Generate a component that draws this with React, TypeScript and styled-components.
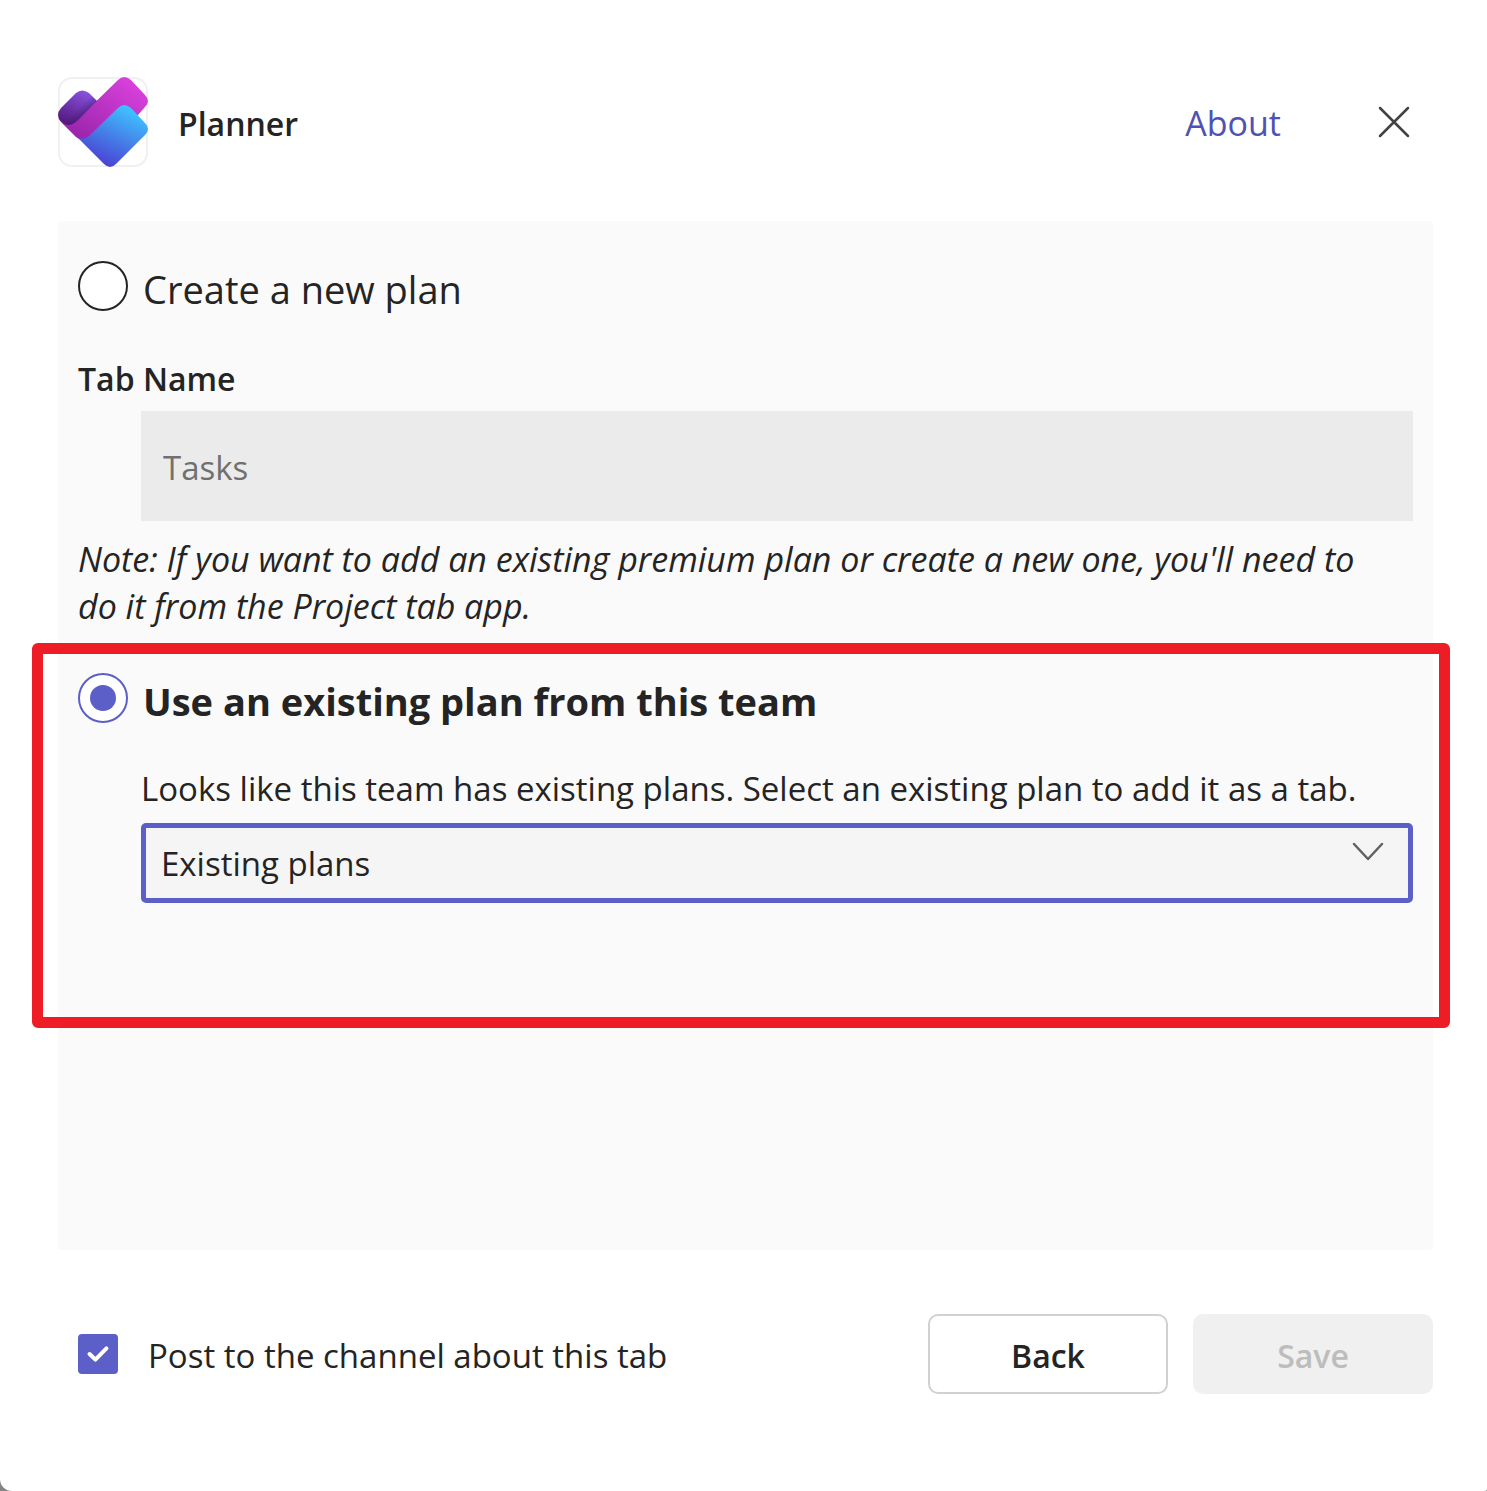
import React, { useState } from "react";
import styled, { createGlobalStyle } from "styled-components";

const GlobalStyle = createGlobalStyle`
  *, *::before { box-sizing: border-box; }
  body {
    margin: 0;
    background: #848484;
    color: #242424;
    font-family: "Open Sans", "Noto Sans", sans-serif;
    font-size: 33px;
    line-height: 47px;
  }
  button, input, select { font: inherit; color: inherit; margin: 0; }
`;

const Dialog = styled.main`
  display: flex;
  flex-direction: column;
  min-height: 100vh;
  padding: 77px 54px 97px 58px;
  background: #fff;
  border-radius: 0 0 2px 12px;
`;

const Header = styled.header`
  display: flex;
  align-items: center;
  height: 90px;
  margin-bottom: 54px;
`;

const LogoFrame = styled.div`
  width: 90px;
  height: 90px;
  margin-right: 30px;
  border-radius: 14px;
  box-shadow: inset 0 0 0 2px #f0f0f0;
  svg { display: block; }
`;

const Title = styled.h1`
  flex: 1;
  margin: 0;
  padding-top: 3px;
  font-size: 32px;
  font-weight: 600;
`;

const AboutLink = styled.a`
  margin-right: 74px;
  padding-top: 3px;
  color: #4f52b2;
  font-size: 34px;
  text-decoration: none;
`;

const CloseButton = styled.button`
  display: grid;
  place-items: center;
  width: 78px;
  height: 78px;
  padding: 0;
  border: 0;
  background: none;
`;

const Panel = styled.section`
  flex: 1;
  padding: 40px 20px;
  background: #fafafa;
  border-radius: 4px;
`;

const OptionRow = styled.div`
  display: flex;
  gap: 15px;
`;

const OptionLabel = styled.label<{ $selected: boolean }>`
  font-size: 38px;
  line-height: 56px;
  font-weight: ${(p) => (p.$selected ? 700 : 400)};
`;

const Radio = styled.input`
  appearance: none;
  display: grid;
  place-items: center;
  flex: none;
  width: 50px;
  height: 50px;
  border: 2px solid #242424;
  border-radius: 50%;
  background: #fff;
  &:checked { border-color: #5b5fc7; }
  &:checked::before {
    content: "";
    width: 26px;
    height: 26px;
    border-radius: 50%;
    background: #5b5fc7;
  }
`;

const FieldLabel = styled.label`
  display: block;
  margin: 38px 0 9px;
  font-size: 32px;
  font-weight: 600;
`;

const Indented = styled.div`
  margin-left: 63px;
`;

const TextInput = styled.input`
  display: block;
  width: 100%;
  height: 110px;
  padding: 3px 22px 0;
  border: 0;
  background: #ebebeb;
  &:disabled { color: #707070; }
`;

const Note = styled.p`
  margin: 15px 0 13px;
  padding-right: 40px;
  font-size: 34px;
  font-style: italic;
`;

const ExistingPlan = styled.div`
  position: relative;
  padding: 30px 0 125px;
`;

const Highlight = styled.div`
  position: absolute;
  inset: 0 -37px 0 -46px;
  border: 11px solid #ee1c24;
  border-radius: 6px;
  pointer-events: none;
`;

const SelectLabel = styled.label`
  display: block;
  margin: 36px 0 11px;
`;

const SelectBox = styled.div`
  display: grid;
  > * { grid-area: 1 / 1; }
  > svg {
    justify-self: end;
    margin: 19px 29px 0 0;
    pointer-events: none;
  }
`;

const Select = styled.select`
  appearance: none;
  width: 100%;
  height: 80px;
  padding: 0 80px 0 15px;
  border: 5px solid #5b5fc7;
  border-radius: 5px;
  background: #f5f5f5;
  outline: 0;
`;

const Footer = styled.footer`
  display: flex;
  align-items: center;
  gap: 25px;
  margin-top: 64px;
  padding-left: 20px;
`;

const PostOption = styled.label`
  display: flex;
  flex: 1;
  align-items: center;
  gap: 30px;
`;

const PostText = styled.span`
  padding-top: 3px;
`;

const CheckWrap = styled.span`
  display: grid;
  place-items: center;
  > * { grid-area: 1 / 1; }
  > svg { pointer-events: none; }
`;

const Checkbox = styled.input`
  appearance: none;
  width: 40px;
  height: 40px;
  border: 2px solid #5b5fc7;
  border-radius: 4px;
  &:checked { background: #5b5fc7; }
`;

const ActionButton = styled.button`
  width: 240px;
  height: 80px;
  padding: 3px 0 0;
  border: 2px solid #d1d1d1;
  border-radius: 10px;
  background: #fff;
  font-size: 32px;
  font-weight: 600;
  &:disabled {
    border-color: #f0f0f0;
    background: #f0f0f0;
    color: #bdbdbd;
  }
`;

const PlannerLogo = () => (
  <svg width="90" height="90" viewBox="0 0 90 90" aria-hidden="true">
    <defs>
      <linearGradient id="violet" x1="28" y1="16" x2="14" y2="48" gradientUnits="userSpaceOnUse">
        <stop offset="0" stopColor="#8650dc" />
        <stop offset="1" stopColor="#561a80" />
      </linearGradient>
      <linearGradient id="shade" x1="18" y1="24" x2="30" y2="36" gradientUnits="userSpaceOnUse">
        <stop offset="0.4" stopColor="#3b1268" stopOpacity="0" />
        <stop offset="1" stopColor="#3b1268" stopOpacity="0.5" />
      </linearGradient>
      <linearGradient id="pink" x1="70" y1="2" x2="26" y2="62" gradientUnits="userSpaceOnUse">
        <stop offset="0" stopColor="#d840dc" />
        <stop offset="1" stopColor="#9c26ac" />
      </linearGradient>
      <linearGradient id="blue" x1="75" y1="34" x2="48" y2="90" gradientUnits="userSpaceOnUse">
        <stop offset="0" stopColor="#3fc0ff" />
        <stop offset="1" stopColor="#4a40d2" />
      </linearGradient>
    </defs>
    <path fill="url(#pink)" d="M60 3Q66-3 73 3L87 18Q93 24 87 30L80 38L60 50L31 60Q24 65 18 60L4 46L20 42Z" />
    <path fill="url(#violet)" d="M18 16Q24 11 31 16L39 24L20 43Q11 52 3 45Q-3 38 3 31Z" />
    <path fill="url(#shade)" d="M18 16Q24 11 31 16L39 24L20 43Q11 52 3 45Q-3 38 3 31Z" />
    <path fill="url(#blue)" d="M60 31Q66 25 73 31L87 46Q93 52 87 58L58 87Q52 93 46 87L20 61Q26 63 31 59Z" />
  </svg>
);

export default function App() {
  const [mode, setMode] = useState("existing");
  const [post, setPost] = useState(true);
  return (
    <>
      <GlobalStyle />
      <Dialog>
        <Header>
          <LogoFrame><PlannerLogo /></LogoFrame>
          <Title>Planner</Title>
          <AboutLink href="#about">About</AboutLink>
          <CloseButton type="button" aria-label="Close">
            <svg width="32" height="32" viewBox="0 0 32 32" fill="none" stroke="#424242" strokeWidth="2.5" strokeLinecap="round">
              <path d="M2 2L30 30M30 2L2 30" />
            </svg>
          </CloseButton>
        </Header>
        <Panel>
          <OptionRow>
            <Radio type="radio" name="plan" id="new-plan" checked={mode === "new"} onChange={() => setMode("new")} />
            <OptionLabel htmlFor="new-plan" $selected={mode === "new"}>Create a new plan</OptionLabel>
          </OptionRow>
          <FieldLabel htmlFor="tab-name">Tab Name</FieldLabel>
          <Indented>
            <TextInput id="tab-name" defaultValue="Tasks" disabled={mode !== "new"} />
          </Indented>
          <Note>
            Note: If you want to add an existing premium plan or create a new one, you'll need to do it from the
            Project tab app.
          </Note>
          <ExistingPlan>
            <OptionRow>
              <Radio type="radio" name="plan" id="existing-plan" checked={mode === "existing"} onChange={() => setMode("existing")} />
              <OptionLabel htmlFor="existing-plan" $selected={mode === "existing"}>Use an existing plan from this team</OptionLabel>
            </OptionRow>
            <Indented>
              <SelectLabel htmlFor="plans">
                Looks like this team has existing plans. Select an existing plan to add it as a tab.
              </SelectLabel>
              <SelectBox>
                <Select id="plans"><option>Existing plans</option></Select>
                <svg width="32" height="20" viewBox="0 0 32 20" fill="none" stroke="#616161" strokeWidth="2.5" strokeLinecap="round" strokeLinejoin="round">
                  <path d="M2 2L16 17L30 2" />
                </svg>
              </SelectBox>
            </Indented>
            <Highlight />
          </ExistingPlan>
        </Panel>
        <Footer>
          <PostOption>
            <CheckWrap>
              <Checkbox type="checkbox" checked={post} onChange={(e) => setPost(e.target.checked)} />
              {post && (
                <svg width="22" height="18" viewBox="0 0 22 18" fill="none" stroke="#fff" strokeWidth="4" strokeLinecap="round" strokeLinejoin="round">
                  <path d="M2.6 9L8.4 14.6L19.4 3.4" />
                </svg>
              )}
            </CheckWrap>
            <PostText>Post to the channel about this tab</PostText>
          </PostOption>
          <ActionButton type="button">Back</ActionButton>
          <ActionButton type="button" disabled>Save</ActionButton>
        </Footer>
      </Dialog>
    </>
  );
}
